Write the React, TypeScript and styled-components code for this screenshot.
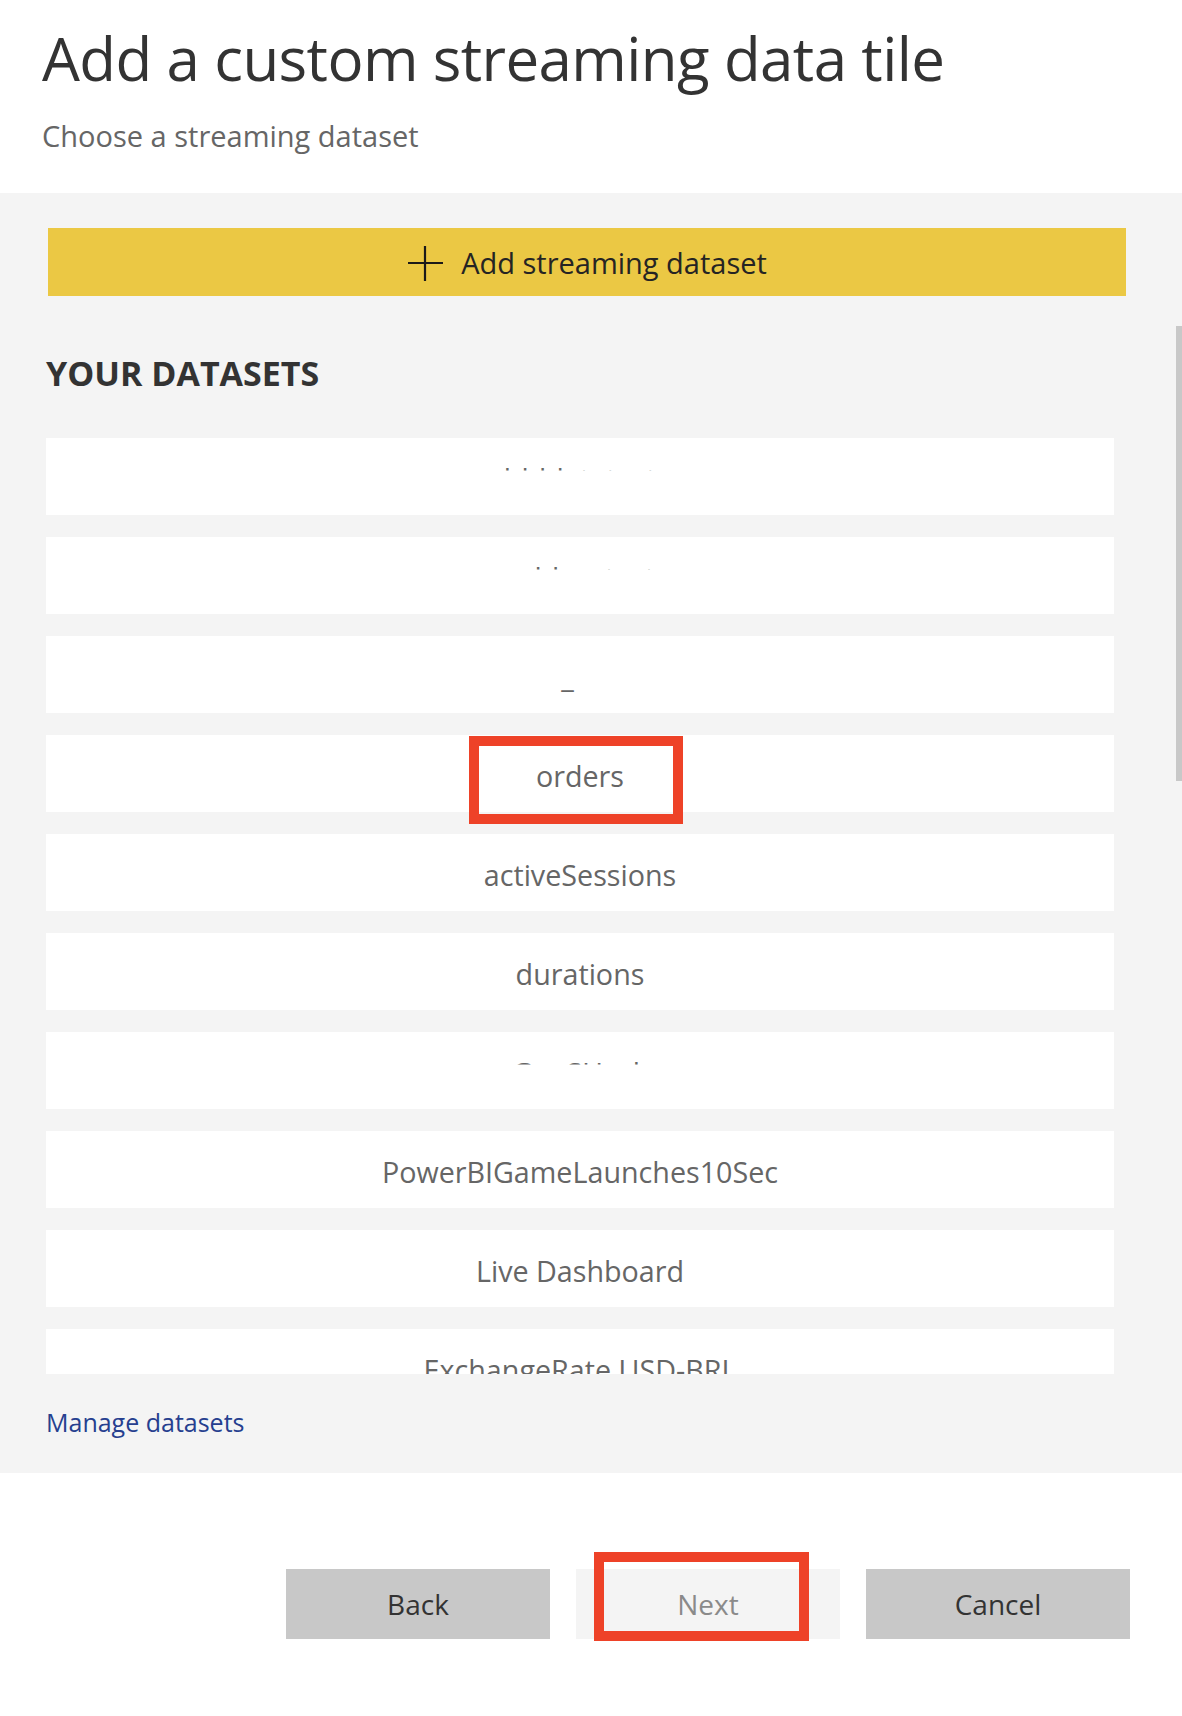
import React from 'react';
import styled, { createGlobalStyle } from 'styled-components';

const GlobalStyle = createGlobalStyle`
  html, body {
    margin: 0;
    padding: 0;
    background: #ffffff;
    font-family: "Open Sans", "Noto Sans", sans-serif;
  }
`;

type Dataset = { name: string; band?: [number, number] };

// band = visible slice of the text (top, bottom inset in px), the rest is blanked out
const datasets: Dataset[] = [
  { name: 'hbldatatest', band: [7, 27] },
  { name: 'azblog_test', band: [8, 27] },
  { name: 'iot_data', band: [32, 1] },
  { name: 'orders' },
  { name: 'activeSessions' },
  { name: 'durations' },
  { name: 'GeoSHack', band: [8, 27] },
  { name: 'PowerBIGameLaunches10Sec' },
  { name: 'Live Dashboard' },
  { name: 'ExchangeRate USD-BRL' },
];

function App() {
  return (
    <>
      <GlobalStyle />
      <Page>
        <Header>
          <Title>Add a custom streaming data tile</Title>
          <Subtitle>Choose a streaming dataset</Subtitle>
        </Header>

        <Body>
          <Scrollbar />
          <AddButton>
            <svg width="36" height="36" viewBox="0 0 36 36">
              <path d="M18 1v35M1 18h35" stroke="#1b1a19" strokeWidth="2.2" fill="none" />
            </svg>
            <span>Add streaming dataset</span>
          </AddButton>

          <SectionTitle>YOUR DATASETS</SectionTitle>

          <List>
            {datasets.map((d) => (
              <Row key={d.name}>
                <RowText $band={d.band}>{d.name}</RowText>
                {d.name === 'orders' && <Highlight $left={423} $top={1} $w={214} $h={88} />}
              </Row>
            ))}
          </List>

          <ManageLink href="#">Manage datasets</ManageLink>
        </Body>

        <Footer>
          <FooterButton>Back</FooterButton>
          <FooterButton $disabled>
            Next
            <Highlight $left={18} $top={-17} $w={215} $h={89} />
          </FooterButton>
          <FooterButton>Cancel</FooterButton>
        </Footer>
      </Page>
    </>
  );
}

const Page = styled.div`
  width: 1182px;
  min-height: 1716px;
  display: flex;
  flex-direction: column;
  background: #fff;
`;

const Header = styled.header`
  height: 193px;
  box-sizing: border-box;
  padding: 27px 0 0 42px;
`;

const Title = styled.h1`
  margin: 0;
  font-size: 60px;
  line-height: 62px;
  font-weight: 400;
  color: #333333;
  letter-spacing: -0.6px;
`;

const Subtitle = styled.p`
  margin: 32px 0 0;
  font-size: 29px;
  line-height: 29px;
  color: #666666;
`;

const Body = styled.section`
  position: relative;
  background: #f4f4f4;
  padding: 35px 0 38px 46px;
  display: flex;
  flex-direction: column;
  align-items: flex-start;
`;

const Scrollbar = styled.div`
  position: absolute;
  right: 0;
  top: 133px;
  width: 6px;
  height: 455px;
  background: #c8c8c8;
`;

const AddButton = styled.button`
  margin-left: 2px;
  width: 1078px;
  height: 68px;
  border: none;
  background: #ebc844;
  display: flex;
  align-items: center;
  justify-content: center;
  gap: 18px;
  font-family: inherit;
  font-size: 29px;
  color: #252423;
  cursor: pointer;
  padding: 0;

  svg {
    margin-top: 2px;
  }
`;

const SectionTitle = styled.h2`
  margin: 60px 0 0;
  font-size: 34px;
  line-height: 34px;
  font-weight: 700;
  color: #333333;
`;

const List = styled.div`
  margin-top: 48px;
  width: 1068px;
  height: 936px;
  overflow: hidden;
  display: flex;
  flex-direction: column;
  gap: 22px;
`;

const Row = styled.div`
  position: relative;
  flex: 0 0 77px;
  background: #ffffff;
  display: flex;
  align-items: center;
  justify-content: center;
`;

const RowText = styled.span<{ $band?: [number, number] }>`
  font-size: 28.7px;
  color: #666666;
  margin-top: 3px;
  ${(p) => (p.$band ? `clip-path: inset(${p.$band[0]}px 0 ${p.$band[1]}px 0);` : '')}
`;

const Highlight = styled.div<{ $left: number; $top: number; $w: number; $h: number }>`
  position: absolute;
  left: ${(p) => p.$left}px;
  top: ${(p) => p.$top}px;
  width: ${(p) => p.$w}px;
  height: ${(p) => p.$h}px;
  box-sizing: border-box;
  border: 10px solid #ee4228;
  pointer-events: none;
`;

const ManageLink = styled.a`
  margin-top: 35px;
  font-size: 25px;
  line-height: 26px;
  color: #263f8f;
  text-decoration: none;
`;

const Footer = styled.footer`
  padding: 96px 52px 0 0;
  display: flex;
  justify-content: flex-end;
  gap: 26px;
`;

const FooterButton = styled.button<{ $disabled?: boolean }>`
  position: relative;
  width: 264px;
  height: 70px;
  border: none;
  padding: 0;
  font-family: inherit;
  font-size: 28px;
  background: ${(p) => (p.$disabled ? '#f4f4f4' : '#c8c8c8')};
  color: ${(p) => (p.$disabled ? '#8a8a8a' : '#333333')};
  cursor: ${(p) => (p.$disabled ? 'default' : 'pointer')};
`;

export default App;
